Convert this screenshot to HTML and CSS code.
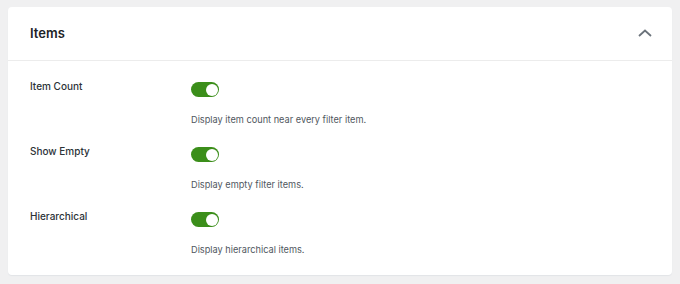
FILE: index.html
```html
<!DOCTYPE html>
<html lang="en">
<head>
    <meta charset="UTF-8">
    <meta name="viewport" content="width=device-width, initial-scale=1.0">
    <title>Items</title>
    <link rel="stylesheet" href="styles.css">
</head>
<body>
    <div class="panel">
        <header class="panel-header">
            <h2 class="panel-title">Items</h2>
            <button class="panel-toggle" aria-label="Collapse">
                <svg width="14" height="8" viewBox="0 0 14 8" fill="none">
                    <path d="M1 7L7 1.5L13 7" stroke="#6b737b" stroke-width="1.8"/>
                </svg>
            </button>
        </header>

        <div class="panel-body">
            <div class="setting-row">
                <div class="setting-label">Item Count</div>
                <div class="setting-field">
                    <span class="switch is-on"><span class="switch-knob"></span></span>
                    <p class="setting-help">Display item count near every filter item.</p>
                </div>
            </div>

            <div class="setting-row">
                <div class="setting-label">Show Empty</div>
                <div class="setting-field">
                    <span class="switch is-on"><span class="switch-knob"></span></span>
                    <p class="setting-help">Display empty filter items.</p>
                </div>
            </div>

            <div class="setting-row">
                <div class="setting-label">Hierarchical</div>
                <div class="setting-field">
                    <span class="switch is-on"><span class="switch-knob"></span></span>
                    <p class="setting-help">Display hierarchical items.</p>
                </div>
            </div>
        </div>
    </div>
</body>
</html>
```

FILE: styles.css
```css
:root {
    --page-bg: #f0f0f1;
    --card-bg: #ffffff;
    --border-color: #ececec;
    --title-color: #1d2327;
    --label-color: #2c3338;
    --help-color: #50575e;
    --switch-on: #3b8e1a;
}

* {
    margin: 0;
    padding: 0;
    box-sizing: border-box;
}

body {
    font-family: 'Inter', 'Liberation Sans', sans-serif;
    background-color: var(--page-bg);
    padding: 7px 8px;
}

.panel {
    background-color: var(--card-bg);
    border-radius: 4px;
    box-shadow: 0 1px 1px #e2e4e7;
}

.panel-header {
    height: 54px;
    display: flex;
    align-items: center;
    justify-content: space-between;
    padding: 0 20px 0 22px;
    border-bottom: 1px solid var(--border-color);
}

.panel-title {
    font-size: 13px;
    font-weight: 600;
    color: var(--title-color);
    margin-top: -1px;
}

.panel-toggle {
    background: none;
    border: 0;
    display: flex;
    margin-top: -2px;
}

.panel-body {
    padding: 18px 22px 18px;
    display: flex;
    flex-direction: column;
    gap: 17px;
}

.setting-row {
    display: grid;
    grid-template-columns: 161px 1fr;
}

.setting-label {
    font-size: 10px;
    font-weight: 500;
    line-height: 14px;
    color: var(--label-color);
}

.setting-field {
    display: flex;
    flex-direction: column;
    align-items: flex-start;
}

/* переключатель */
.switch {
    width: 28px;
    height: 15px;
    margin-top: 3px;
    border-radius: 8px;
    background-color: #c3c4c7;
    position: relative;
}

.switch.is-on {
    background-color: var(--switch-on);
}

.switch-knob {
    position: absolute;
    top: 1.5px;
    right: 1.5px;
    width: 12px;
    height: 12px;
    border-radius: 50%;
    background-color: #fff;
}

.setting-help {
    margin-top: 16px;
    font-size: 9.2px;
    line-height: 14px;
    color: var(--help-color);
}
```
